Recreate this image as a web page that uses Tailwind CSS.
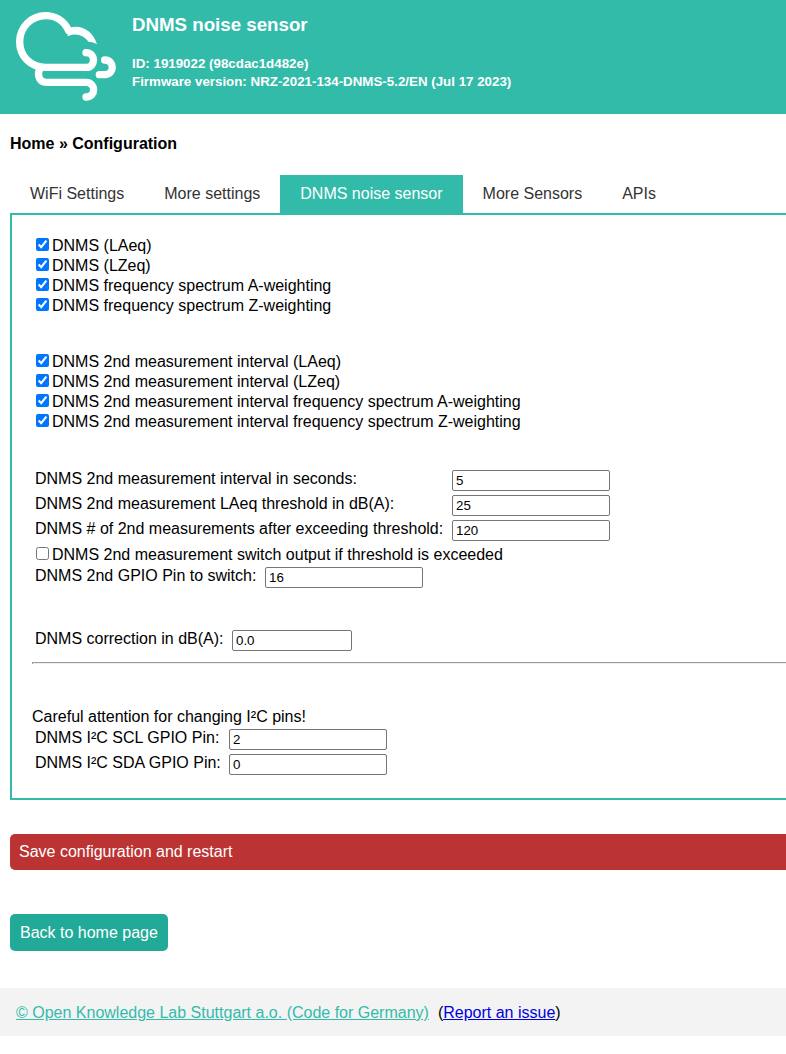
<!DOCTYPE html>
<html lang="en">
<head>
<meta charset="utf-8">
<title>DNMS noise sensor</title>
<script src="https://cdn.jsdelivr.net/npm/@tailwindcss/browser@4"></script>
</head>
<body class="w-[786px] h-[1054px] overflow-hidden bg-white text-black font-['Liberation_Sans',Arial,sans-serif] text-[16px] leading-[20px]">
<header class="h-[114px] bg-[#33bbaa] text-white flex font-bold">
  <svg class="w-[130px] h-[114px] shrink-0" viewBox="0 0 390 342" fill="none" stroke="#fff" stroke-width="22" stroke-linecap="round">
    <path d="M206 92C193 64 167 47 137 47A78 78 0 0 0 59 125C59 168 91 202 137 202H260C287 202 288 158 258 158"/>
    <path stroke="none" fill="#fff" d="M202 109L210 83C245 73 278 93 291 133C283 128 275 125 265 125C251 107 231 97 202 109Z"/>
    <path d="M122 202C111 218 113 247 140 247H258C288 247 289 291 258 291"/>
    <path d="M314 180C344 180 345 224 314 224H298"/>
  </svg>
  <div class="pl-[2px] pt-[13px]">
    <h1 class="text-[18.72px] leading-[24px]">DNMS noise sensor</h1>
    <p class="mt-[18px] text-[13.33px] leading-[18px]">ID: 1919022 (98cdac1d482e)<br>Firmware version: NRZ-2021-134-DNMS-5.2/EN (Jul 17 2023)</p>
  </div>
</header>
<main class="pl-[10px]">
  <h2 class="pt-[20px] font-bold">Home » Configuration</h2>
  <nav class="mt-[21px] flex h-[38px] leading-[38px] text-[#333]">
    <a class="px-[20px]">WiFi Settings</a>
    <a class="px-[20px]">More settings</a>
    <a class="px-[20px] bg-[#33bbaa] text-white">DNMS noise sensor</a>
    <a class="px-[20px]">More Sensors</a>
    <a class="px-[20px]">APIs</a>
  </nav>
  <section class="h-[587px] border-2 border-r-0 border-[#33bbaa] pl-[20px] pt-[20px] leading-[22px]">
    <div class="pl-[4px]">
      <label class="flex h-[20px] gap-[3px]"><input type="checkbox" checked class="size-[13px] mt-[3px]">DNMS (LAeq)</label>
      <label class="flex h-[20px] gap-[3px]"><input type="checkbox" checked class="size-[13px] mt-[3px]">DNMS (LZeq)</label>
      <label class="flex h-[20px] gap-[3px]"><input type="checkbox" checked class="size-[13px] mt-[3px]">DNMS frequency spectrum A-weighting</label>
      <label class="flex h-[20px] gap-[3px]"><input type="checkbox" checked class="size-[13px] mt-[3px]">DNMS frequency spectrum Z-weighting</label>
    </div>
    <div class="pl-[4px] mt-[36px]">
      <label class="flex h-[20px] gap-[3px]"><input type="checkbox" checked class="size-[13px] mt-[3px]">DNMS 2nd measurement interval (LAeq)</label>
      <label class="flex h-[20px] gap-[3px]"><input type="checkbox" checked class="size-[13px] mt-[3px]">DNMS 2nd measurement interval (LZeq)</label>
      <label class="flex h-[20px] gap-[3px]"><input type="checkbox" checked class="size-[13px] mt-[3px]">DNMS 2nd measurement interval frequency spectrum A-weighting</label>
      <label class="flex h-[20px] gap-[3px]"><input type="checkbox" checked class="size-[13px] mt-[3px]">DNMS 2nd measurement interval frequency spectrum Z-weighting</label>
    </div>
    <div class="pl-[3px] mt-[37px]">
      <label class="flex h-[25px]"><span class="w-[417px]">DNMS 2nd measurement interval in seconds:</span><input value="5" class="mt-[2px] w-[158px] h-[21px] border border-[#767676] rounded-[2px] px-[3px] text-[13.33px]"></label>
      <label class="flex h-[25px]"><span class="w-[417px]">DNMS 2nd measurement LAeq threshold in dB(A):</span><input value="25" class="mt-[2px] w-[158px] h-[21px] border border-[#767676] rounded-[2px] px-[3px] text-[13.33px]"></label>
      <label class="flex h-[25px]"><span class="w-[417px]">DNMS # of 2nd measurements after exceeding threshold:</span><input value="120" class="mt-[2px] w-[158px] h-[21px] border border-[#767676] rounded-[2px] px-[3px] text-[13.33px]"></label>
    </div>
    <label class="flex h-[20px] gap-[3px] ml-[4px] mt-[1px]"><input type="checkbox" class="size-[13px] mt-[3px]">DNMS 2nd measurement switch output if threshold is exceeded</label>
    <label class="flex h-[25px] ml-[3px] mt-[1px]"><span class="w-[230px]">DNMS 2nd GPIO Pin to switch:</span><input value="16" class="mt-[2px] w-[158px] h-[21px] border border-[#767676] rounded-[2px] px-[3px] text-[13.33px]"></label>
    <label class="flex h-[25px] ml-[3px] mt-[38px]"><span class="w-[197px]">DNMS correction in dB(A):</span><input value="0.0" class="mt-[2px] w-[120px] h-[21px] border border-[#767676] rounded-[2px] px-[3px] text-[13.33px]"></label>
    <hr class="mt-[9px] h-[2px] border-0 border-t border-l border-[#9a9a9a] bg-[#eeeeee]">
    <p class="mt-[42px] h-[20px]">Careful attention for changing I²C pins!</p>
    <div class="pl-[3px] mt-[1px]">
      <label class="flex h-[25px]"><span class="w-[194px]">DNMS I²C SCL GPIO Pin:</span><input value="2" class="mt-[2px] w-[158px] h-[21px] border border-[#767676] rounded-[2px] px-[3px] text-[13.33px]"></label>
      <label class="flex h-[25px]"><span class="w-[194px]">DNMS I²C SDA GPIO Pin:</span><input value="0" class="mt-[2px] w-[158px] h-[21px] border border-[#767676] rounded-[2px] px-[3px] text-[13.33px]"></label>
    </div>
  </section>
  <button class="mt-[34px] block w-full h-[36px] rounded-l-[5px] bg-[#bb3333] text-white text-left pl-[9px]">Save configuration and restart</button>
  <a class="mt-[44px] block w-[158px] h-[37px] leading-[37px] rounded-[5px] bg-[#22aa99] text-white pl-[10px]">Back to home page</a>
</main>
<footer class="mt-[37px] h-[48px] leading-[50px] bg-[#f3f3f3] pl-[16px] flex gap-[9px]"><a class="text-[#33bbaa] underline">© Open Knowledge Lab Stuttgart a.o. (Code for Germany)</a><span>(<a class="text-[#0000dd] underline">Report an issue</a>)</span></footer>
</body>
</html>
